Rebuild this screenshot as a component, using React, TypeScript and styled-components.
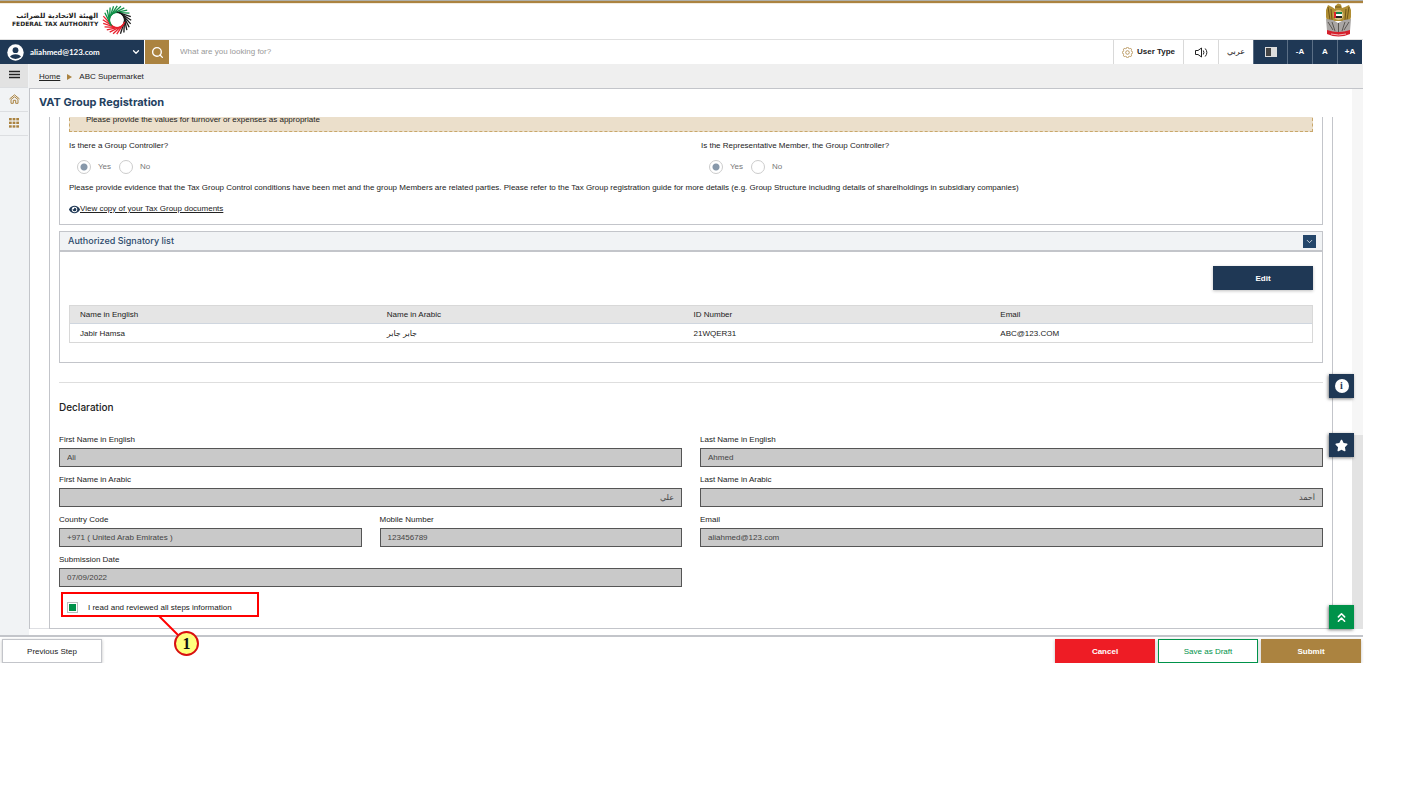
import React from 'react';
import styled, { createGlobalStyle } from 'styled-components';
import { ChevronDown, ChevronsUp, Search } from 'lucide-react';
import { FaStar, FaEye } from 'react-icons/fa';

const navy = '#1f3855';
const gold = '#ab8340';
const green = '#00924a';
const line = '#c3c5ca';

const GlobalStyle = createGlobalStyle`
  * { box-sizing: border-box; }
  body {
    margin: 0;
    background: #fff;
    color: #222;
    font: 500 8px/12px "Liberation Sans", "DejaVu Sans", sans-serif;
  }
  button, input { font: inherit; margin: 0; }
  button { cursor: pointer; padding: 0; }
  h1, h2, p { margin: 0; }
  svg { display: block; flex: none; }
`;

const Page = styled.div`
  margin-right: 51px;
`;

const Header = styled.header`
  display: flex;
  justify-content: space-between;
  align-items: center;
  height: 39px;
  padding: 0 11px 0 12px;
  border-top: 1px solid #aeb0ab;
  background: linear-gradient(${gold} 2px, #e6d9c1 2px, #fff 3px);
`;

const Brand = styled.a`
  display: flex;
  align-items: center;
  gap: 4px;
  color: #222;
  text-decoration: none;
`;

const BrandText = styled.span`
  display: flex;
  flex-direction: column;
  align-items: flex-end;
  font: bold 6px/8px "DejaVu Sans", sans-serif;
`;

const BrandArabic = styled.span`
  font-size: 7px;
`;

const Nav = styled.nav`
  display: flex;
  height: 25px;
  padding-right: 1px;
  border-top: 1px solid #e0e0e0;
`;

const UserMenu = styled.button`
  display: flex;
  align-items: center;
  gap: 6px;
  width: 144px;
  padding: 0 3px 0 7px;
  border: 0;
  background: ${navy};
  color: #fff;
  font: bold 8px/12px Lato, sans-serif;
  text-align: left;
`;

const UserName = styled.span`
  flex: 1;
`;

const SearchButton = styled.button`
  display: grid;
  place-items: center;
  width: 24px;
  margin-left: 1px;
  border: 0;
  background: ${gold};
  color: #fff;
`;

const SearchBox = styled.input`
  flex: 1;
  min-width: 0;
  padding: 0 11px;
  border: 0;
  outline: 0;
  &::placeholder { color: #999; opacity: 1; }
`;

const Tool = styled.button<{ $w: number }>`
  display: flex;
  align-items: center;
  justify-content: center;
  gap: 4px;
  width: ${(p) => p.$w}px;
  border: 0;
  border-left: 1px solid #d9d9d9;
  background: #fff;
  color: #222;
  font-weight: bold;
  &:lang(ar) { font-weight: normal; }
`;

const DarkTool = styled(Tool)`
  border-left-color: #5b6f86;
  background: ${navy};
  color: #fff;
`;

const Contrast = styled.span`
  width: 12px;
  height: 10px;
  border: 1px solid #ddd;
  background: linear-gradient(90deg, #444 50%, #ddd 50%);
`;

const Body = styled.div`
  display: flex;
`;

const Side = styled.aside`
  display: flex;
  flex-direction: column;
  width: 29px;
  background: #f1f3f5;
`;

const SideButton = styled.button<{ $active?: boolean }>`
  display: grid;
  place-items: center;
  width: 28px;
  height: 24px;
  padding-bottom: 2px;
  border: 0;
  border-bottom: 1px solid #dcdee1;
  background: ${(p) => (p.$active ? '#e2e2e2' : 'transparent')};
  color: ${(p) => (p.$active ? '#222' : gold)};
`;

const Column = styled.div`
  flex: 1;
  min-width: 0;
`;

const Crumbs = styled.nav`
  display: flex;
  align-items: center;
  gap: 7px;
  height: 24px;
  padding: 2px 0 0 10px;
  background: #efefef;
`;

const CrumbLink = styled.a`
  color: #222;
`;

const CrumbArrow = styled.span`
  border: 3px solid transparent;
  border-left: 5px solid ${gold};
  border-right: 0;
`;

const Main = styled.main`
  position: relative;
  z-index: 1;
  display: flex;
  border-top: 1px solid ${line};
  border-left: 1px solid ${line};
  margin-bottom: 6px;
`;

const Content = styled.div`
  flex: 1;
  min-width: 0;
  border-bottom: 1px solid #dedfe3;
`;

const PageTitle = styled.h1`
  height: 28px;
  padding: 0 9px;
  color: #24415f;
  font: bold 11px/27px Inter, sans-serif;
`;

/* Clips the scrolled-away top only, so the callout can hang over the footer. */
const Viewport = styled.div`
  display: flow-root;
  clip-path: inset(0 0 -40px 0);
`;

const Sheet = styled.div`
  margin: -11px 19px -1px;
  padding: 0 9px 11px;
  border: 1px solid ${line};
  border-top: 0;
`;

const ScrollTrack = styled.div`
  display: flex;
  align-items: flex-end;
  width: 11px;
  background: #f6f6f6;
`;

const ScrollThumb = styled.div`
  width: 100%;
  height: 36%;
  background: #e3e3e3;
`;

const Card = styled.section`
  border: 1px solid ${line};
  margin-bottom: 6px;
`;

const CardBody = styled.div<{ $bottom: number }>`
  padding: 0 9px ${(p) => p.$bottom}px;
`;

const CardHeader = styled.header`
  display: flex;
  align-items: center;
  justify-content: space-between;
  height: 20px;
  padding: 0 6px 0 8px;
  border-bottom: 2px solid ${line};
  background: #f1f3f5;
`;

const CardTitle = styled.h2`
  color: #2c4a6b;
  font: 500 9px/12px Inter, sans-serif;
`;

const Collapse = styled.button`
  display: grid;
  place-items: center;
  width: 13px;
  height: 13px;
  border: 0;
  background: #24466a;
  color: #fff;
`;

const Notice = styled.p`
  height: 25px;
  padding: 0 16px;
  border: 1px dashed #c9a76a;
  background: #ebdfcb;
  line-height: 23px;
`;

const Questions = styled.div`
  display: grid;
  grid-template-columns: 1fr 1fr;
  gap: 20px;
  padding: 8px 0;
`;

const Question = styled.fieldset`
  min-width: 0;
  margin: 0;
  padding: 0;
  border: 0;
`;

const Legend = styled.legend`
  padding: 0;
  margin-bottom: 8px;
`;

const Choices = styled.div`
  display: flex;
  gap: 8px;
  padding-left: 8px;
`;

const Choice = styled.label`
  display: flex;
  align-items: center;
  gap: 7px;
  height: 14px;
  color: #777;
`;

const Radio = styled.input.attrs({ type: 'radio' })`
  appearance: none;
  width: 14px;
  height: 14px;
  border: 1px solid #ccc;
  border-radius: 50%;
  background: #fff;
  &:checked { background: radial-gradient(circle, #8798aa 3px, #fff 4px); }
`;

const DocLink = styled.a`
  display: flex;
  align-items: center;
  width: max-content;
  margin-top: 9px;
  color: #222;
`;

const EditRow = styled.div`
  display: flex;
  justify-content: flex-end;
  padding: 14px 0 15px;
`;

const Button = styled.button<{ $bg?: string; $fg?: string; $line?: string }>`
  width: 100px;
  height: 24px;
  padding-top: 1px;
  border: 1px solid ${(p) => p.$line || p.$bg || '#c3c5ca'};
  background: ${(p) => p.$bg || '#fff'};
  color: ${(p) => p.$fg || '#222'};
  font-weight: ${(p) => (p.$bg ? 'bold' : 'normal')};
  box-shadow: 0 1px 3px rgba(0, 0, 0, 0.25);
`;

const Table = styled.table`
  width: 100%;
  table-layout: fixed;
  border-collapse: separate;
  border-spacing: 0;
  border: 1px solid #d8d8d8;
  text-align: left;
`;

const Col = styled.col`
  width: 24.7%;
`;

const Th = styled.th`
  height: 18px;
  padding: 1px 10px 0;
  border-bottom: 1px solid #cfd6df;
  background: #e5e5e5;
  font-weight: 500;
`;

const Td = styled.td`
  height: 18px;
  padding: 1px 10px 0;
`;

const Rule = styled.hr`
  margin: 19px 0 16px;
  border: 0;
  border-top: 1px solid #dedede;
`;

const SectionTitle = styled.h2`
  margin-bottom: 19px;
  font: 500 10px/16px Inter, sans-serif;
`;

const Form = styled.div`
  display: grid;
  grid-template-columns: repeat(4, minmax(0, 1fr));
  gap: 7px 18px;
`;

const FieldBox = styled.label<{ $span: number }>`
  display: flex;
  flex-direction: column;
  gap: 2px;
  grid-column: span ${(p) => p.$span};
`;

const TextInput = styled.input`
  width: 100%;
  height: 19px;
  padding: 0 7px;
  border: 1px solid #555;
  border-radius: 0;
  background: #c9c9c9;
  color: #444;
`;

const Confirm = styled.div`
  position: relative;
  width: 198px;
  margin: 5px 0 0 2px;
`;

const ConfirmLabel = styled.label`
  display: flex;
  align-items: flex-start;
  gap: 10px;
  height: 25px;
  padding: 10px 6px 0;
`;

const Tick = styled.input.attrs({ type: 'checkbox' })`
  appearance: none;
  width: 11px;
  height: 11px;
  border: 1px solid #bbb;
  background: #fff;
  &:checked { background: ${green}; box-shadow: inset 0 0 0 1px #fff; }
`;

const CalloutFrame = styled.span`
  position: absolute;
  inset: 0;
  border: 2px solid #f00;
  pointer-events: none;
`;

const CalloutLine = styled.svg`
  position: absolute;
  top: 24px;
  left: 96px;
`;

const CalloutBadge = styled.span`
  position: absolute;
  top: 39px;
  left: 113px;
  width: 25px;
  height: 25px;
  border: 2px solid #d81010;
  border-radius: 50%;
  background: #ffff7d;
  color: #111;
  font: bold 16px/21px "Liberation Serif", serif;
  text-align: center;
`;

const Floating = styled.div`
  position: absolute;
  top: 285px;
  right: 9px;
  bottom: 0;
  display: flex;
  flex-direction: column;
  gap: 35px;
`;

const FloatButton = styled.button<{ $end?: boolean }>`
  display: grid;
  place-items: center;
  width: 25px;
  height: 24px;
  margin-top: ${(p) => (p.$end ? 'auto' : '0')};
  border: 0;
  background: ${(p) => (p.$end ? green : navy)};
  color: #fff;
  box-shadow: -1px 1px 3px rgba(0, 0, 0, 0.5);
`;

const InfoDot = styled.span`
  width: 14px;
  height: 14px;
  border-radius: 50%;
  background: #fff;
  color: ${navy};
  font: bold 10px/14px "Liberation Serif", serif;
`;

const Footer = styled.footer`
  display: flex;
  gap: 3px;
  padding: 2px 2px 0;
  border-top: 2px solid ${line};
`;

const Spacer = styled.span`
  flex: 1;
`;

function Swirl() {
  const count = 24;
  const strokes = Array.from({ length: count }, (_, i) => {
    const a = (i / count) * 360;
    const color = a >= 190 && a < 320 ? '#109048' : a >= 75 && a < 190 ? '#e8202c' : '#1a1a1a';
    const pt = (deg: number, r: number) => {
      const t = (deg * Math.PI) / 180;
      return `${(15 + r * Math.cos(t)).toFixed(2)} ${(15 + r * Math.sin(t)).toFixed(2)}`;
    };
    return <path key={i} d={`M${pt(a - 62, 8)} L${pt(a + 16, 14.2)}`} stroke={color} strokeWidth="1.3" />;
  });
  return (
    <svg width="30" height="30" viewBox="0 0 30 30" fill="none">
      {strokes}
    </svg>
  );
}

function Emblem() {
  return (
    <svg width="27" height="34" viewBox="0 0 27 34">
      <path d="M10 3 L13 0.500 L16 1.500 L17 5 L20 4 L24 2 L26 7 L26 14 L24 22 L18 18 H9 L3 22 L1 14 L1 7 L3 2 L7 4 L10 6 Z" fill="#b08e34" />
      <path d="M3 4 L5 17 M6 6 L7 17 M24 4 L22 17 M21 6 L20 17 M10 4 L16 4" stroke="#6d5518" strokeWidth="1" fill="none" />
      <path d="M1 16 L8 17 L13 20 L19 17 L26 16 L25 28 L19 30 H8 L2 28 Z" fill="#a9a6a4" />
      <path d="M3 19 L8 27 M7 19 L10 28 M24 19 L19 27 M20 19 L17 28 M13.500 20 V29" stroke="#5b5753" strokeWidth="1" />
      <circle cx="13.500" cy="12" r="5" fill="#d8c489" />
      <path d="M10 9 H17 V11 H10Z" fill="#14804a" />
      <path d="M10 11 H17 V13 H10Z" fill="#fff" />
      <path d="M11 13 H17 V15 H11Z" fill="#222" />
      <path d="M9 9 H11 V15 H9Z" fill="#e0212d" />
      <path d="M2 27 Q13.500 31 25 27 L25 31 Q13.500 36 2 31 Z" fill="#d5202c" />
      <path d="M6 31 Q13.500 33 21 31" stroke="#f3b6b9" strokeWidth="1" fill="none" />
    </svg>
  );
}

function Avatar() {
  return (
    <svg width="17" height="17" viewBox="0 0 17 17">
      <circle cx="8.500" cy="8.500" r="8.200" fill="#fff" />
      <circle cx="8.500" cy="6.200" r="2.900" fill={navy} />
      <path d="M3 12.800 Q4.200 10.200 8.500 10.200 Q12.800 10.200 14 12.800 Q12 14.900 8.500 14.900 Q5 14.900 3 12.800Z" fill={navy} />
    </svg>
  );
}

function Gear() {
  const teeth = Array.from({ length: 8 }, (_, i) => {
    const t = (i * Math.PI) / 4;
    return <circle key={i} cx={5.5 + 4 * Math.cos(t)} cy={5.5 + 4 * Math.sin(t)} r="1.200" />;
  });
  return (
    <svg width="11" height="11" viewBox="0 0 11 11" fill="none" stroke={gold} strokeWidth="0.800">
      {teeth}
      <circle cx="5.500" cy="5.500" r="3.800" fill="#fff" stroke="none" />
      <circle cx="5.500" cy="5.500" r="1.800" />
    </svg>
  );
}

function Speaker() {
  return (
    <svg width="13" height="11" viewBox="0 0 13 11" fill="none" stroke="#222" strokeWidth="1">
      <path d="M0.500 3.500 H3 L6.500 1 V10 L3 7.500 H0.500 Z" />
      <path d="M8.300 3.500 Q9.500 5.500 8.300 7.500 M10.200 1.500 Q13.500 5.500 10.200 9.500" />
    </svg>
  );
}

function House() {
  return (
    <svg width="11" height="10" viewBox="0 0 11 10" fill="none" stroke="currentColor" strokeWidth="1">
      <path d="M0.500 5 L5.500 0.800 L10.500 5" />
      <path d="M2 5.500 V9.300 H4.300 V6.300 H6.700 V9.300 H9 V5.500 L5.500 2.800 Z" />
    </svg>
  );
}

function Burger() {
  return (
    <svg width="11" height="9" viewBox="0 0 11 9" fill="none" stroke="currentColor" strokeWidth="1.400">
      <path d="M0 1.500H11M0 4.500H11M0 7.500H11" />
    </svg>
  );
}

function Dots() {
  const at = [0, 4, 8];
  return (
    <svg width="10" height="10" viewBox="0 0 11 11" fill="currentColor">
      {at.map((y) => at.map((x) => <rect key={`${x}-${y}`} x={x} y={y} width="3" height="2.600" />))}
    </svg>
  );
}

function Field({ label, value, span = 1, rtl }: { label: string; value: string; span?: number; rtl?: boolean }) {
  return (
    <FieldBox $span={span}>
      {label}
      <TextInput readOnly value={value} dir={rtl ? 'rtl' : 'ltr'} />
    </FieldBox>
  );
}

function YesNo({ text, name }: { text: string; name: string }) {
  return (
    <Question disabled>
      <Legend>{text}</Legend>
      <Choices>
        <Choice><Radio name={name} defaultChecked />Yes</Choice>
        <Choice><Radio name={name} />No</Choice>
      </Choices>
    </Question>
  );
}

export default function App() {
  return (
    <>
      <GlobalStyle />
      <Page>
        <Header>
          <Brand href="#">
            <BrandText>
              <BrandArabic lang="ar">الهيئة الاتحادية للضرائب</BrandArabic>
              <span>FEDERAL TAX AUTHORITY</span>
            </BrandText>
            <Swirl />
          </Brand>
          <Emblem />
        </Header>
        <Nav>
          <UserMenu>
            <Avatar />
            <UserName>aliahmed@123.com</UserName>
            <ChevronDown size={10} strokeWidth={3} />
          </UserMenu>
          <SearchButton aria-label="Search"><Search size={13} strokeWidth={2.5} /></SearchButton>
          <SearchBox type="search" aria-label="Search" placeholder="What are you looking for?" />
          <Tool $w={70}><Gear />User Type</Tool>
          <Tool $w={35} aria-label="Listen"><Speaker /></Tool>
          <Tool $w={35} lang="ar">عربي</Tool>
          <DarkTool $w={34} aria-label="Contrast"><Contrast /></DarkTool>
          <DarkTool $w={25}>-A</DarkTool>
          <DarkTool $w={25}>A</DarkTool>
          <DarkTool $w={25}>+A</DarkTool>
        </Nav>
        <Body>
          <Side>
            <SideButton $active aria-label="Menu"><Burger /></SideButton>
            <SideButton aria-label="Home"><House /></SideButton>
            <SideButton aria-label="Services"><Dots /></SideButton>
          </Side>
          <Column>
            <Crumbs>
              <CrumbLink href="#">Home</CrumbLink>
              <CrumbArrow />
              <span>ABC Supermarket</span>
            </Crumbs>
            <Main>
              <Content>
                <PageTitle>VAT Group Registration</PageTitle>
                <Viewport>
                  <Sheet>
                    <Card>
                      <CardBody $bottom={9}>
                        <Notice>Please provide the values for turnover or expenses as appropriate</Notice>
                        <Questions>
                          <YesNo name="controller" text="Is there a Group Controller?" />
                          <YesNo name="representative" text="Is the Representative Member, the Group Controller?" />
                        </Questions>
                        <p>
                          Please provide evidence that the Tax Group Control conditions have been met and the group Members are related
                          parties. Please refer to the Tax Group registration guide for more details (e.g. Group Structure including details of
                          sharelholdings in subsidiary companies)
                        </p>
                        <DocLink href="#"><FaEye size={11} color={navy} />View copy of your Tax Group documents</DocLink>
                      </CardBody>
                    </Card>
                    <Card>
                      <CardHeader>
                        <CardTitle>Authorized Signatory list</CardTitle>
                        <Collapse aria-label="Collapse"><ChevronDown size={9} /></Collapse>
                      </CardHeader>
                      <CardBody $bottom={19}>
                        <EditRow><Button $bg={navy} $fg="#fff">Edit</Button></EditRow>
                        <Table>
                          <colgroup><Col /><Col /><Col /><col /></colgroup>
                          <thead>
                            <tr><Th>Name in English</Th><Th>Name in Arabic</Th><Th>ID Number</Th><Th>Email</Th></tr>
                          </thead>
                          <tbody>
                            <tr><Td>Jabir Hamsa</Td><Td lang="ar">جابر جابر</Td><Td>21WQER31</Td><Td>ABC@123.COM</Td></tr>
                          </tbody>
                        </Table>
                      </CardBody>
                    </Card>
                    <Rule />
                    <SectionTitle>Declaration</SectionTitle>
                    <Form>
                      <Field span={2} label="First Name in English" value="Ali" />
                      <Field span={2} label="Last Name in English" value="Ahmed" />
                      <Field span={2} rtl label="First Name in Arabic" value="علي" />
                      <Field span={2} rtl label="Last Name in Arabic" value="أحمد" />
                      <Field label="Country Code" value="+971 ( United Arab Emirates )" />
                      <Field label="Mobile Number" value="123456789" />
                      <Field span={2} label="Email" value="aliahmed@123.com" />
                      <Field span={2} label="Submission Date" value="07/09/2022" />
                    </Form>
                    <Confirm>
                      <ConfirmLabel><Tick defaultChecked />I read and reviewed all steps information</ConfirmLabel>
                      <CalloutFrame />
                      <CalloutLine width="26" height="24" viewBox="0 0 26 24">
                        <path d="M2 0 L22 20" stroke="#f00" strokeWidth="2" />
                      </CalloutLine>
                      <CalloutBadge>1</CalloutBadge>
                    </Confirm>
                  </Sheet>
                </Viewport>
              </Content>
              <ScrollTrack><ScrollThumb /></ScrollTrack>
              <Floating>
                <FloatButton aria-label="Information"><InfoDot>i</InfoDot></FloatButton>
                <FloatButton aria-label="Favourites"><FaStar size={13} /></FloatButton>
                <FloatButton $end aria-label="Back to top"><ChevronsUp size={15} strokeWidth={2.5} /></FloatButton>
              </Floating>
            </Main>
          </Column>
        </Body>
        <Footer>
          <Button>Previous Step</Button>
          <Spacer />
          <Button $bg="#ee1c25" $fg="#fff">Cancel</Button>
          <Button $fg={green} $line={green}>Save as Draft</Button>
          <Button $bg={gold} $fg="#fff">Submit</Button>
        </Footer>
      </Page>
    </>
  );
}
